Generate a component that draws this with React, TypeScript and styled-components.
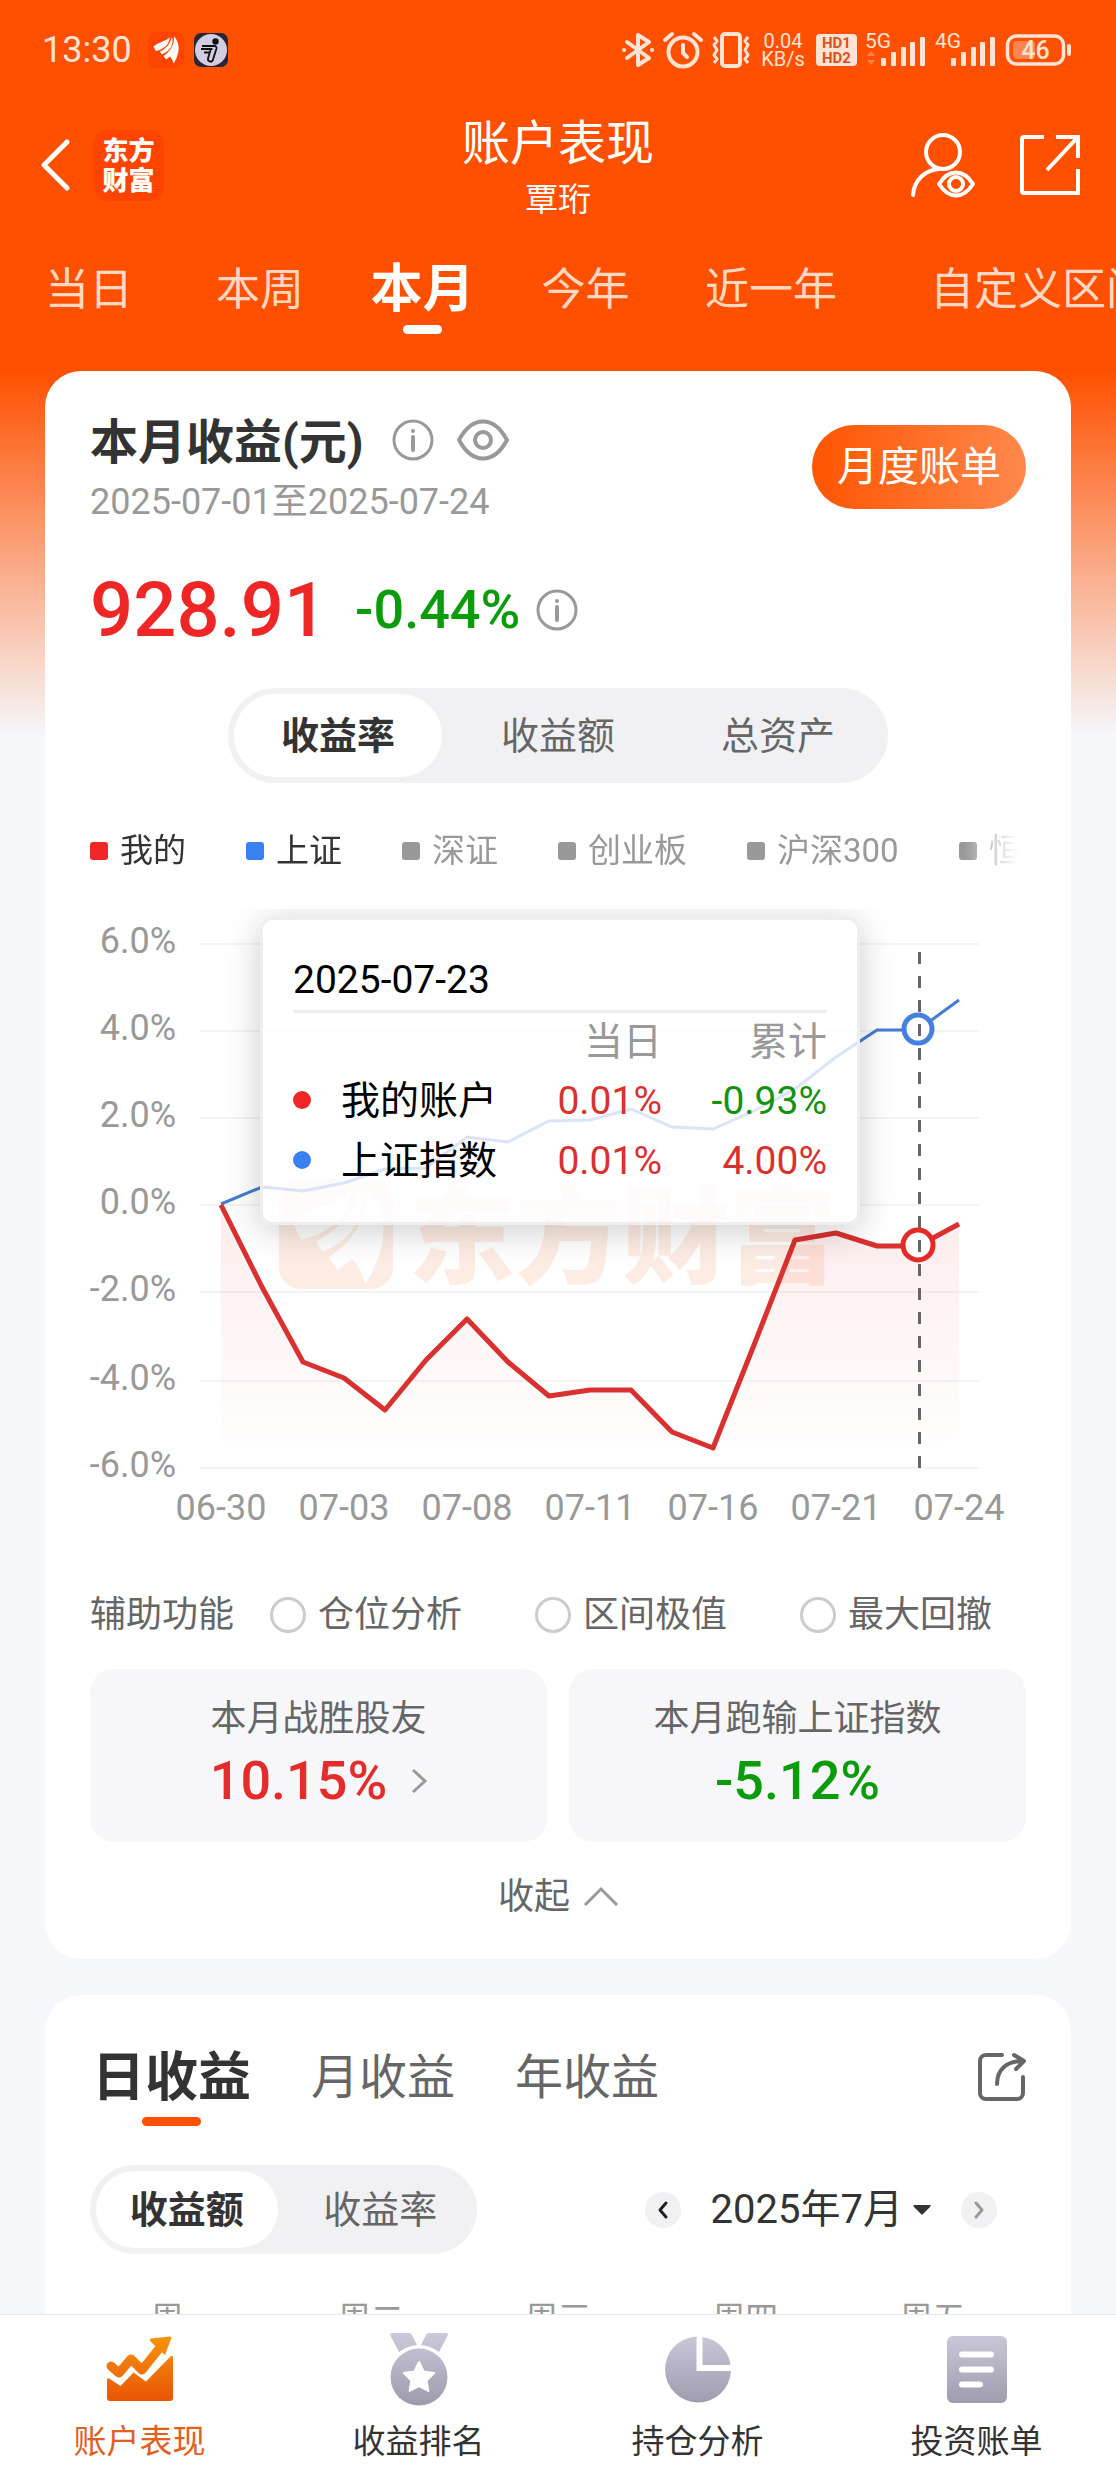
import React, { useState } from "react";
import styled, { createGlobalStyle } from "styled-components";

const GlobalStyle = createGlobalStyle`
  *, *::before, *::after { box-sizing: border-box; }
  body {
    margin: 0;
    font-family: Roboto, "Noto Sans CJK SC", sans-serif;
    color: #333;
    background: #f6f7fa;
  }
  button {
    font: inherit;
    color: inherit;
    background: none;
    border: 0;
    padding: 0;
    cursor: pointer;
  }
  a { color: inherit; text-decoration: none; }
  h1, h2, p { margin: 0; font-weight: 400; }
  svg { display: block; flex: none; overflow: visible; }
`;

const Shell = styled.div`
  height: 100vh;
  display: flex;
  flex-direction: column;
  overflow: hidden;
  background: linear-gradient(#ff5000 0, #ff5000 370px, #f6f7fa 736px);
`;

const ScrollArea = styled.main`
  flex: 1;
  min-height: 0;
  overflow-y: auto;
  overflow-x: hidden;
  scrollbar-width: none;
`;

/* ---------- status bar ---------- */

const StatusBar = styled.div`
  height: 108px;
  padding: 0 44px 8px 42px;
  display: flex;
  align-items: center;
  justify-content: space-between;
  color: #ffe3d5;
`;

const StatusGroup = styled.div<{ $gap: number }>`
  display: flex;
  align-items: center;
  gap: ${(p) => p.$gap}px;
`;

const Clock = styled.span`
  font-size: 36px;
  line-height: 40px;
  margin-right: 6px;
`;

const NetSpeed = styled.span`
  width: 48px;
  font-size: 20px;
  line-height: 18px;
  text-align: center;
`;

/* ---------- header ---------- */

const Header = styled.header`
  height: 114px;
  padding: 0 36px;
  display: grid;
  grid-template-columns: 1fr auto 1fr;
  align-items: center;
  color: #fff;
`;

const HeaderSide = styled.div<{ $end?: boolean }>`
  display: flex;
  align-items: center;
  gap: ${(p) => (p.$end ? 44 : 22)}px;
  justify-content: ${(p) => (p.$end ? "flex-end" : "flex-start")};
`;

const BrandBadge = styled.span`
  width: 71px;
  height: 71px;
  padding-top: 6px;
  border-radius: 15px;
  background: #ff4400;
  font-size: 26px;
  line-height: 30px;
  font-weight: 900;
  text-align: center;
`;

const HeaderTitle = styled.div`
  text-align: center;
`;

const PageTitle = styled.h1`
  font-size: 48px;
  line-height: 70px;
`;

const AccountName = styled.p`
  font-size: 33px;
  line-height: 42px;
`;

const PeriodTabs = styled.nav`
  display: flex;
  padding: 38px 0 37px;
  overflow: hidden;
`;

const PeriodTab = styled.button<{ $width: number; $active: boolean }>`
  flex: none;
  width: ${(p) => p.$width}px;
  display: flex;
  flex-direction: column;
  align-items: center;
  gap: 5px;
  font-size: ${(p) => (p.$active ? 52 : 44)}px;
  font-weight: ${(p) => (p.$active ? 700 : 400)};
  line-height: 60px;
  white-space: nowrap;
  color: ${(p) => (p.$active ? "#fff" : "#ffd8c4")};
  &::after {
    content: "";
    width: 39px;
    height: 9px;
    border-radius: 5px;
    background: ${(p) => (p.$active ? "#fff" : "transparent")};
  }
`;

/* ---------- cards ---------- */

const Card = styled.section<{ $top: number; $bottom: number }>`
  margin: 0 45px 36px;
  padding: ${(p) => p.$top}px 45px ${(p) => p.$bottom}px;
  border-radius: 36px;
  background: #fff;
`;

const CardHead = styled.div<{ $drop: number }>`
  display: flex;
  align-items: flex-start;
  justify-content: space-between;
  > button { margin-top: ${(p) => p.$drop}px; }
`;

const TitleRow = styled.div`
  display: flex;
  align-items: center;
  gap: 22px;
  button { padding-bottom: 6px; }
`;

const CardTitle = styled.h2`
  font-size: 48px;
  line-height: 60px;
  font-weight: 700;
  margin-right: 6px;
`;

const DateRange = styled.p`
  font-size: 36px;
  line-height: 58px;
  color: #999;
`;

const BillButton = styled.button`
  width: 214px;
  height: 84px;
  border-radius: 42px;
  background: linear-gradient(90deg, #ff5500, #ff884d);
  color: #fff;
  font-size: 41px;
  line-height: 84px;
`;

const TotalRow = styled.div`
  display: flex;
  align-items: center;
  margin-top: 31px;
  line-height: 96px;
`;

const TotalAmount = styled.span`
  font-size: 76px;
  font-weight: 500;
  color: #ef2626;
`;

const TotalRate = styled.span`
  margin: 0 16px 0 28px;
  font-size: 54px;
  font-weight: 500;
  color: #0a9c0a;
`;

const Segmented = styled.div<{ $width: number; $height: number }>`
  width: ${(p) => p.$width}px;
  height: ${(p) => p.$height}px;
  display: flex;
  border-radius: 48px;
  background: #f1f1f4;
`;

const SegmentedCenter = styled.div`
  display: flex;
  justify-content: center;
  margin-top: 30px;
`;

const Segment = styled.button<{ $active: boolean }>`
  flex: 1;
  border: 6px solid transparent;
  border-radius: 48px;
  background: ${(p) => (p.$active ? "#fff" : "transparent")};
  background-clip: padding-box;
  font-size: 38px;
  line-height: 40px;
  font-weight: ${(p) => (p.$active ? 700 : 400)};
  color: ${(p) => (p.$active ? "#333" : "#666")};
`;

const Legend = styled.div`
  margin-top: 44px;
  margin-right: 8px;
  display: flex;
  gap: 60px;
  overflow: hidden;
  -webkit-mask-image: linear-gradient(90deg, #000 calc(100% - 54px), transparent);
  mask-image: linear-gradient(90deg, #000 calc(100% - 54px), transparent);
`;

const LegendItem = styled.button<{ $color: string; $on: boolean }>`
  flex: none;
  display: flex;
  align-items: center;
  gap: 12px;
  font-size: 33px;
  line-height: 48px;
  color: ${(p) => (p.$on ? "#333" : "#999")};
  &::before {
    content: "";
    width: 18px;
    height: 18px;
    border-radius: 3px;
    background: ${(p) => p.$color};
  }
`;

/* ---------- chart ---------- */

const ChartBox = styled.div`
  position: relative;
  margin-top: 34px;
  overflow: hidden;
`;

const ChartSvg = styled.svg`
  width: 100%;
  height: auto;
  font-size: 36px;
`;

const Tooltip = styled.div`
  position: absolute;
  left: 170px;
  top: 8px;
  width: 600px;
  padding: 30px 30px 31px;
  border: 3px solid #eee;
  border-radius: 12px;
  background: rgba(255, 255, 255, 0.8);
  background-clip: padding-box;
  box-shadow: 0 6px 36px rgba(0, 0, 0, 0.2);
  color: #000;
  font-size: 39px;
`;

const TooltipDate = styled.p`
  line-height: 60px;
  border-bottom: 3px solid #eee;
`;

const TooltipTable = styled.table`
  width: 100%;
  table-layout: fixed;
  border-collapse: collapse;
  line-height: 60px;
  th, td { padding: 0; font-weight: 400; text-align: right; }
  th:last-child { width: 165px; }
  thead th { color: #999; line-height: 58px; }
`;

const SeriesName = styled.th<{ $color: string }>`
  && { text-align: left; }
  white-space: nowrap;
  &::before {
    content: "";
    display: inline-block;
    width: 18px;
    height: 18px;
    margin-right: 30px;
    border-radius: 50%;
    vertical-align: 5px;
    background: ${(p) => p.$color};
  }
`;

const Delta = styled.td<{ $up: boolean }>`
  color: ${(p) => (p.$up ? "#d93030" : "#129212")};
`;

/* ---------- helpers under the chart ---------- */

const HelperRow = styled.div`
  margin-top: 61px;
  display: flex;
  align-items: center;
  font-size: 36px;
  line-height: 48px;
  color: #666;
`;

const HelperOption = styled.label`
  display: flex;
  align-items: center;
  gap: 12px;
  margin-left: 36px;
  & + & { margin-left: 73px; }
`;

const RoundCheck = styled.input`
  appearance: none;
  width: 36px;
  height: 36px;
  margin: 0;
  border: 3px solid #ccc;
  border-radius: 50%;
  &:checked { border-color: #ff5000; background: #ff5000; }
`;

const StatGrid = styled.div`
  margin-top: 30px;
  display: grid;
  grid-template-columns: 1fr 1fr;
  gap: 22px;
`;

const StatBox = styled.a`
  height: 173px;
  padding-top: 20px;
  border-radius: 24px;
  background: #f7f7fa;
  display: flex;
  flex-direction: column;
  align-items: center;
  font-size: 36px;
  line-height: 60px;
  color: #666;
`;

const StatValue = styled.span<{ $up: boolean }>`
  display: flex;
  align-items: center;
  gap: 24px;
  font-size: 54px;
  line-height: 64px;
  font-weight: 500;
  color: ${(p) => (p.$up ? "#e42c2c" : "#0a9c0a")};
`;

const CollapseButton = styled.button`
  margin: 30px auto 0;
  display: flex;
  align-items: center;
  gap: 14px;
  font-size: 36px;
  line-height: 50px;
  color: #666;
`;

/* ---------- daily profit card ---------- */

const ProfitTabs = styled.div`
  display: flex;
  gap: 60px;
  padding-left: 2px;
`;

const ProfitTab = styled.button<{ $active: boolean }>`
  display: flex;
  flex-direction: column;
  align-items: center;
  gap: 3px;
  font-size: ${(p) => (p.$active ? 53 : 48)}px;
  font-weight: ${(p) => (p.$active ? 700 : 400)};
  line-height: 72px;
  color: ${(p) => (p.$active ? "#333" : "#666")};
  &::after {
    content: "";
    width: 59px;
    height: 9px;
    border-radius: 5px;
    background: ${(p) => (p.$active ? "#ff5000" : "transparent")};
  }
`;

const ControlsRow = styled.div`
  margin-top: 39px;
  display: flex;
  align-items: center;
  justify-content: space-between;
`;

const MonthPicker = styled.div`
  display: flex;
  align-items: center;
  gap: 30px;
  margin-right: 29px;
`;

const StepButton = styled.button`
  width: 36px;
  height: 36px;
  border-radius: 50%;
  background: #f1f1f4;
  display: grid;
  place-items: center;
`;

const MonthButton = styled.button`
  display: flex;
  align-items: center;
  gap: 10px;
  font-size: 40px;
  line-height: 48px;
`;

const WeekRow = styled.div`
  margin-top: 41px;
  display: grid;
  grid-template-columns: repeat(5, 1fr);
  text-align: center;
  font-size: 33px;
  line-height: 48px;
  color: #999;
`;

/* ---------- bottom navigation ---------- */

const BottomNav = styled.nav`
  flex: none;
  height: 166px;
  padding-top: 18px;
  display: grid;
  grid-template-columns: repeat(4, 1fr);
  border-top: 1px solid #e8e8ea;
  background: #fff;
`;

const NavItem = styled.a<{ $active?: boolean }>`
  display: flex;
  flex-direction: column;
  align-items: center;
  gap: 13px;
  font-size: 33px;
  line-height: 48px;
  color: ${(p) => (p.$active ? "#e0601f" : "#333")};
`;

/* ---------- icons ---------- */

const InfoIcon = () => (
  <svg width="42" height="42" viewBox="0 0 42 42" fill="none" stroke="#999" strokeWidth="3">
    <circle cx="21" cy="21" r="19" />
    <path d="M21 18v13" strokeWidth="4" strokeLinecap="round" />
    <circle cx="21" cy="12" r="2" fill="#999" stroke="none" />
  </svg>
);

const EyeIcon = () => (
  <svg width="54" height="42" viewBox="0 0 54 42" fill="none" stroke="#999" strokeWidth="4">
    <path d="M3 21C10 8 18 2.500 27 2.500S44 8 51 21C44 34 36 39.500 27 39.500S10 34 3 21Z" strokeLinejoin="round" />
    <circle cx="27" cy="21" r="8" />
  </svg>
);

const Feathers = () => (
  <>
    <path d="M5.500 14.500C10 10 17 10 22 5.200C21 12 17 17 7.800 19Z" />
    <path d="M12 19.500C19 16 22.500 11 24 4.700C26 13 22 19 13.700 22.500Z" />
    <path d="M15.500 24C23 19 26.500 12 26 4.300C33 12 31.500 22 25.700 31.500C24.500 28 23.500 26 22 24.500L18 27.500Z" />
  </>
);

const BrandMini = () => (
  <svg width="36" height="36" viewBox="0 0 36 36" fill="#fff">
    <rect width="36" height="36" rx="8" fill="#ff4400" />
    <Feathers />
  </svg>
);

const RunnerMini = () => (
  <svg width="34" height="34" viewBox="0 0 34 34" fill="none">
    <rect width="34" height="34" rx="7" fill="#2a2536" />
    <circle cx="17" cy="17" r="16" fill="#d2cde2" />
    <circle cx="21.500" cy="8.500" r="3.200" fill="#111" />
    <path d="M8 13H20.500a2 2 0 0 1 2 2.500L19 26.500a2.500 2.500 0 0 1-5-1L16.500 17M7 16H18.500M10 19.500H15.500" stroke="#111" strokeWidth="1.800" />
  </svg>
);

const BluetoothIcon = () => (
  <svg width="32" height="36" viewBox="0 0 32 36" fill="none" stroke="currentColor" strokeWidth="4" strokeLinejoin="round" strokeLinecap="round">
    <path d="M5 10L27 26L16 33V3L27 10L5 26" />
    <path d="M2 18h.1M30 18h.1" />
  </svg>
);

const AlarmIcon = () => (
  <svg width="40" height="36" viewBox="0 0 40 36" fill="none" stroke="currentColor" strokeWidth="4" strokeLinecap="round">
    <circle cx="20" cy="20" r="14.500" />
    <path d="M20 13v8l4 4M2 8l7-6M38 8l-7-6" />
  </svg>
);

const VibrateIcon = () => (
  <svg width="38" height="36" viewBox="0 0 38 36" fill="none" stroke="currentColor" strokeWidth="4" strokeLinejoin="round">
    <rect x="10" y="2" width="18" height="32" rx="3" />
    <path d="M2 5l3 4-3 4 3 5-3 5 3 4-3 4M36 5l-3 4 3 4-3 5 3 5-3 4 3 4" strokeWidth="3" />
  </svg>
);

const HdIcon = () => (
  <svg width="41" height="32" viewBox="0 0 41 32">
    <rect width="41" height="32" rx="4" fill="#ffe3d5" />
    <g fill="#d9521a" fontSize="15" fontWeight="700" textAnchor="middle">
      <text x="20.500" y="14">HD1</text>
      <text x="20.500" y="29">HD2</text>
    </g>
  </svg>
);

const SignalIcon = ({ label, active }: { label: string; active?: boolean }) => (
  <svg width="61" height="36" viewBox="0 0 61 36" fill="currentColor">
    <text x="-1" y="16" fontSize="21">{label}</text>
    {active && <path d="M5 19l4 5H1ZM5 33l4-5H1Z" fill="#ff8550" />}
    <rect x="15" y="26" width="5" height="8" rx="1" />
    <rect x="25" y="20" width="5" height="14" rx="1" />
    <rect x="35" y="15" width="5" height="19" rx="1" />
    <rect x="44" y="10" width="5" height="24" rx="1" />
    <rect x="54" y="5" width="5" height="29" rx="1" />
  </svg>
);

const BatteryIcon = () => (
  <svg width="66" height="32" viewBox="0 0 66 32" fill="none">
    <rect x="1.500" y="2" width="56" height="28" rx="9" stroke="currentColor" strokeWidth="3.500" />
    <rect x="7" y="7" width="22" height="18" rx="4" fill="#ff8550" />
    <rect x="61" y="10" width="4" height="12" rx="2" fill="currentColor" />
    <text x="29.500" y="25" fontSize="25" fontWeight="500" textAnchor="middle" fill="#ffe3d5">46</text>
  </svg>
);

const BackIcon = () => (
  <svg width="35" height="54" viewBox="0 0 35 54" fill="none" stroke="#fff" strokeWidth="5" strokeLinecap="round" strokeLinejoin="round">
    <path d="M31 4L8 27L31 50" />
  </svg>
);

const ViewerIcon = () => (
  <svg width="66" height="66" viewBox="0 0 66 66" fill="none" stroke="#fff" strokeWidth="4" strokeLinecap="round">
    <circle cx="33" cy="20" r="17" />
    <path d="M3 63C4 48 15 38 29 37" />
    <path d="M29 52C34 44 39 40.500 46 40.500S58 44 63 52C58 60 53 63.500 46 63.500S34 60 29 52Z" strokeLinejoin="round" />
    <circle cx="46" cy="52" r="7" />
  </svg>
);

const OpenIcon = () => (
  <svg width="60" height="60" viewBox="0 0 60 60" fill="none" stroke="#fff" strokeWidth="4">
    <path d="M24 2H4a2 2 0 0 0-2 2V56a2 2 0 0 0 2 2H58V34" />
    <path d="M36 2H58V23M57 3L27 35" />
  </svg>
);

const ShareIcon = () => (
  <svg width="48" height="48" viewBox="0 0 48 48" fill="none" stroke="#666" strokeWidth="4" strokeLinecap="round" strokeLinejoin="round">
    <path d="M24 2H8a6 6 0 0 0-6 6V40a6 6 0 0 0 6 6H39a6 6 0 0 0 6-6V24" />
    <path d="M19 31C19 17 28 8 45 8M36 2L46 8L38 16" />
  </svg>
);

const SmallChevron = ({ back, color }: { back?: boolean; color: string }) => (
  <svg width="12" height="18" viewBox="0 0 12 18" fill="none" stroke={color} strokeWidth="3" strokeLinecap="round" strokeLinejoin="round">
    <path d={back ? "M9 2L3 9L9 16" : "M3 2L9 9L3 16"} />
  </svg>
);

const NavGradients = () => (
  <svg width="0" height="0" aria-hidden="true">
    <defs>
      <linearGradient id="navGrey" gradientUnits="userSpaceOnUse" x1="0" y1="0" x2="0" y2="72">
        <stop offset="0" stopColor="#cbc9da" />
        <stop offset="1" stopColor="#9c9aab" />
      </linearGradient>
      <linearGradient id="navOrange" gradientUnits="userSpaceOnUse" x1="0" y1="0" x2="0" y2="72">
        <stop offset="0" stopColor="#f7960c" />
        <stop offset="1" stopColor="#e85206" />
      </linearGradient>
    </defs>
  </svg>
);

const TrendIcon = () => (
  <svg width="72" height="72" viewBox="0 0 72 72" fill="url(#navOrange)">
    <path d="M7 33L15 40L27 26L38 37L58 12" fill="none" stroke="url(#navOrange)" strokeWidth="9" strokeLinecap="round" strokeLinejoin="round" />
    <path d="M47 5.500L66 3.500Q68 3.500 67 6L61 22L47 9Q45 6 47 5.500Z" />
    <path d="M3 47Q3 44 6 46L16.500 53L29.500 39.500L42 48.500L66 24Q69 21 69 25V65Q69 68 66 68H6Q3 68 3 65Z" />
  </svg>
);

const MedalIcon = () => (
  <svg width="72" height="72" viewBox="0 0 72 72" fill="url(#navGrey)">
    <path d="M9 0H26Q28 0 29 2L34 12Q24 13 16 19L7.500 3Q6.500 0 9 0ZM63 0H46Q44 0 43 2L38 12Q48 13 56 19L64.500 3Q65.500 0 63 0Z" />
    <circle cx="36" cy="44" r="28.500" />
    <path d="M36 29L40.700 38.600L51.200 40.100L43.600 47.500L45.400 57.900L36 53L26.600 57.900L28.400 47.500L20.800 40.100L31.300 38.600Z" fill="#fff" stroke="#fff" strokeWidth="2" strokeLinejoin="round" />
  </svg>
);

const PieIcon = () => (
  <svg width="72" height="72" viewBox="0 0 72 72" fill="url(#navGrey)">
    <path d="M34.500 3.500V38H69A33 33 0 1 1 34.500 3.500Z" />
    <path d="M40.500 4V32H68.500A33 33 0 0 0 40.500 4Z" />
  </svg>
);

const BillIcon = () => (
  <svg width="72" height="72" viewBox="0 0 72 72">
    <rect x="6" y="3" width="60" height="67" rx="6" fill="url(#navGrey)" />
    <path d="M21 21.500H50M21 36.500H50M21 51.500H39" stroke="#fff" strokeWidth="6" strokeLinecap="round" />
  </svg>
);

/* ---------- data ---------- */

const periods = [
  { label: "当日", width: 178 },
  { label: "本周", width: 164 },
  { label: "本月", width: 161 },
  { label: "今年", width: 165 },
  { label: "近一年", width: 206 },
  { label: "自定义区间", width: 332 },
];

const legend = [
  { label: "我的", color: "#f12626", on: true },
  { label: "上证", color: "#3a80f0", on: true },
  { label: "深证", color: "#999", on: false },
  { label: "创业板", color: "#999", on: false },
  { label: "沪深300", color: "#999", on: false },
  { label: "恒生", color: "#999", on: false },
];

const gridLines = [
  { y: 35, label: "6.0%" },
  { y: 122, label: "4.0%" },
  { y: 209, label: "2.0%" },
  { y: 296, label: "0.0%" },
  { y: 383, label: "-2.0%" },
  { y: 472, label: "-4.0%" },
  { y: 559, label: "-6.0%" },
];

const dateLabels = ["06-30", "07-03", "07-08", "07-11", "07-16", "07-21", "07-24"];

const mine = [296, 378, 453, 469, 501, 451, 410, 453, 487, 481, 481, 523, 539, 436, 331, 324, 337, 337, 315];
const index = [295, 278, 282, 274, 260, 259, 228, 233, 212, 211, 200, 218, 220, 202, 180, 148, 121, 121, 91];

const pointX = (i: number) => 131 + i * 41;
const toPoints = (values: number[]) => values.map((y, i) => `${pointX(i)},${y}`).join(" ");

const Chart = () => (
  <ChartBox>
    <ChartSvg viewBox="0 0 936 621" role="img" aria-label="收益率走势">
      <defs>
        <linearGradient id="mineArea" gradientUnits="userSpaceOnUse" x1="0" y1="296" x2="0" y2="559">
          <stop offset="0" stopColor="#f04040" stopOpacity="0.100" />
          <stop offset="1" stopColor="#f04040" stopOpacity="0" />
        </linearGradient>
      </defs>
      <g fill="#fdece3">
        <rect x="189" y="269" width="114" height="111" rx="22" />
        <text x="318" y="366" fontSize="107" fontWeight="900">东方财富</text>
      </g>
      <g transform="translate(183 262) scale(3.600)" fill="#fff">
        <Feathers />
      </g>
      {gridLines.map((g) => (
        <g key={g.label}>
          <path d={`M110 ${g.y}H889`} stroke="#e6e8f0" />
          <text x="86" y={g.y + 9} textAnchor="end" fill="#999">{g.label}</text>
        </g>
      ))}
      {dateLabels.map((d, i) => (
        <text key={d} x={pointX(i * 3)} y="611" textAnchor="middle" fill="#999">{d}</text>
      ))}
      <polygon points={`131,559 ${toPoints(mine)} 869,559`} fill="url(#mineArea)" />
      <polyline points={toPoints(index)} fill="none" stroke="#467bd0" strokeWidth="3" />
      <polyline points={toPoints(mine)} fill="none" stroke="#d93030" strokeWidth="5" strokeLinejoin="round" />
      <circle cx="828" cy="120" r="14" fill="#fff" stroke="#4480dd" strokeWidth="5" />
      <circle cx="828" cy="336" r="15" fill="#fff" stroke="#e62828" strokeWidth="5" />
      <path d="M829.500 43V559" stroke="#666" strokeWidth="3" strokeDasharray="12 12" />
    </ChartSvg>
    <Tooltip>
      <TooltipDate>2025-07-23</TooltipDate>
      <TooltipTable>
        <thead>
          <tr>
            <th aria-label="名称" />
            <th scope="col">当日</th>
            <th scope="col">累计</th>
          </tr>
        </thead>
        <tbody>
          <tr>
            <SeriesName scope="row" $color="#f12626">我的账户</SeriesName>
            <Delta $up>0.01%</Delta>
            <Delta $up={false}>-0.93%</Delta>
          </tr>
          <tr>
            <SeriesName scope="row" $color="#3a80f0">上证指数</SeriesName>
            <Delta $up>0.01%</Delta>
            <Delta $up>4.00%</Delta>
          </tr>
        </tbody>
      </TooltipTable>
    </Tooltip>
  </ChartBox>
);

const Segments = ({ items, width, height }: { items: string[]; width: number; height: number }) => {
  const [current, setCurrent] = useState(items[0]);
  return (
    <Segmented $width={width} $height={height}>
      {items.map((item) => (
        <Segment key={item} $active={item === current} onClick={() => setCurrent(item)}>
          {item}
        </Segment>
      ))}
    </Segmented>
  );
};

export default function App() {
  const [period, setPeriod] = useState("本月");
  const [profit, setProfit] = useState("日收益");

  return (
    <Shell>
      <GlobalStyle />
      <NavGradients />
      <ScrollArea>
        <StatusBar>
          <StatusGroup $gap={10}>
            <Clock>13:30</Clock>
            <BrandMini />
            <RunnerMini />
          </StatusGroup>
          <StatusGroup $gap={9}>
            <BluetoothIcon />
            <AlarmIcon />
            <VibrateIcon />
            <NetSpeed>0.04 KB/s</NetSpeed>
            <HdIcon />
            <SignalIcon label="5G" active />
            <SignalIcon label="4G" />
            <BatteryIcon />
          </StatusGroup>
        </StatusBar>

        <Header>
          <HeaderSide>
            <button aria-label="返回"><BackIcon /></button>
            <BrandBadge>东方<br />财富</BrandBadge>
          </HeaderSide>
          <HeaderTitle>
            <PageTitle>账户表现</PageTitle>
            <AccountName>覃珩</AccountName>
          </HeaderTitle>
          <HeaderSide $end>
            <button aria-label="查看账户"><ViewerIcon /></button>
            <button aria-label="分享"><OpenIcon /></button>
          </HeaderSide>
        </Header>

        <PeriodTabs>
          {periods.map((p) => (
            <PeriodTab key={p.label} $width={p.width} $active={p.label === period} onClick={() => setPeriod(p.label)}>
              {p.label}
            </PeriodTab>
          ))}
        </PeriodTabs>

        <Card $top={42} $bottom={37}>
          <CardHead $drop={12}>
            <div>
              <TitleRow>
                <CardTitle>本月收益(元)</CardTitle>
                <button aria-label="说明"><InfoIcon /></button>
                <button aria-label="隐藏金额"><EyeIcon /></button>
              </TitleRow>
              <DateRange>2025-07-01至2025-07-24</DateRange>
            </div>
            <BillButton>月度账单</BillButton>
          </CardHead>

          <TotalRow>
            <TotalAmount>928.91</TotalAmount>
            <TotalRate>-0.44%</TotalRate>
            <button aria-label="收益率说明"><InfoIcon /></button>
          </TotalRow>

          <SegmentedCenter>
            <Segments items={["收益率", "收益额", "总资产"]} width={660} height={95} />
          </SegmentedCenter>

          <Legend>
            {legend.map((l) => (
              <LegendItem key={l.label} $color={l.color} $on={l.on}>{l.label}</LegendItem>
            ))}
          </Legend>

          <Chart />

          <HelperRow>
            辅助功能
            {["仓位分析", "区间极值", "最大回撤"].map((name) => (
              <HelperOption key={name}>
                <RoundCheck type="checkbox" />
                {name}
              </HelperOption>
            ))}
          </HelperRow>

          <StatGrid>
            <StatBox href="#rank">
              本月战胜股友
              <StatValue $up>
                10.15%
                <svg width="16" height="26" viewBox="0 0 16 26" fill="none" stroke="#999" strokeWidth="3">
                  <path d="M2 2L14 13L2 24" />
                </svg>
              </StatValue>
            </StatBox>
            <StatBox href="#index">
              本月跑输上证指数
              <StatValue $up={false}>-5.12%</StatValue>
            </StatBox>
          </StatGrid>

          <CollapseButton>
            收起
            <svg width="34" height="20" viewBox="0 0 34 20" fill="none" stroke="#999" strokeWidth="3">
              <path d="M1 18L17 2L33 18" />
            </svg>
          </CollapseButton>
        </Card>

        <Card $top={47} $bottom={37}>
          <CardHead $drop={11}>
            <ProfitTabs>
              {["日收益", "月收益", "年收益"].map((t) => (
                <ProfitTab key={t} $active={t === profit} onClick={() => setProfit(t)}>{t}</ProfitTab>
              ))}
            </ProfitTabs>
            <button aria-label="分享收益"><ShareIcon /></button>
          </CardHead>

          <ControlsRow>
            <Segments items={["收益额", "收益率"]} width={387} height={89} />
            <MonthPicker>
              <StepButton aria-label="上个月"><SmallChevron back color="#222" /></StepButton>
              <MonthButton>
                2025年7月
                <svg width="18" height="10" viewBox="0 0 18 10" fill="#333">
                  <path d="M1.500 0H16.500Q18.500 0 17 2L10 9Q9 10 8 9L1 2Q-.500 0 1.500 0Z" />
                </svg>
              </MonthButton>
              <StepButton aria-label="下个月"><SmallChevron color="#999" /></StepButton>
            </MonthPicker>
          </ControlsRow>

          <WeekRow>
            {["周一", "周二", "周三", "周四", "周五"].map((d) => (
              <span key={d}>{d}</span>
            ))}
          </WeekRow>
        </Card>
      </ScrollArea>

      <BottomNav>
        <NavItem href="#performance" $active><TrendIcon />账户表现</NavItem>
        <NavItem href="#ranking"><MedalIcon />收益排名</NavItem>
        <NavItem href="#positions"><PieIcon />持仓分析</NavItem>
        <NavItem href="#bills"><BillIcon />投资账单</NavItem>
      </BottomNav>
    </Shell>
  );
}
